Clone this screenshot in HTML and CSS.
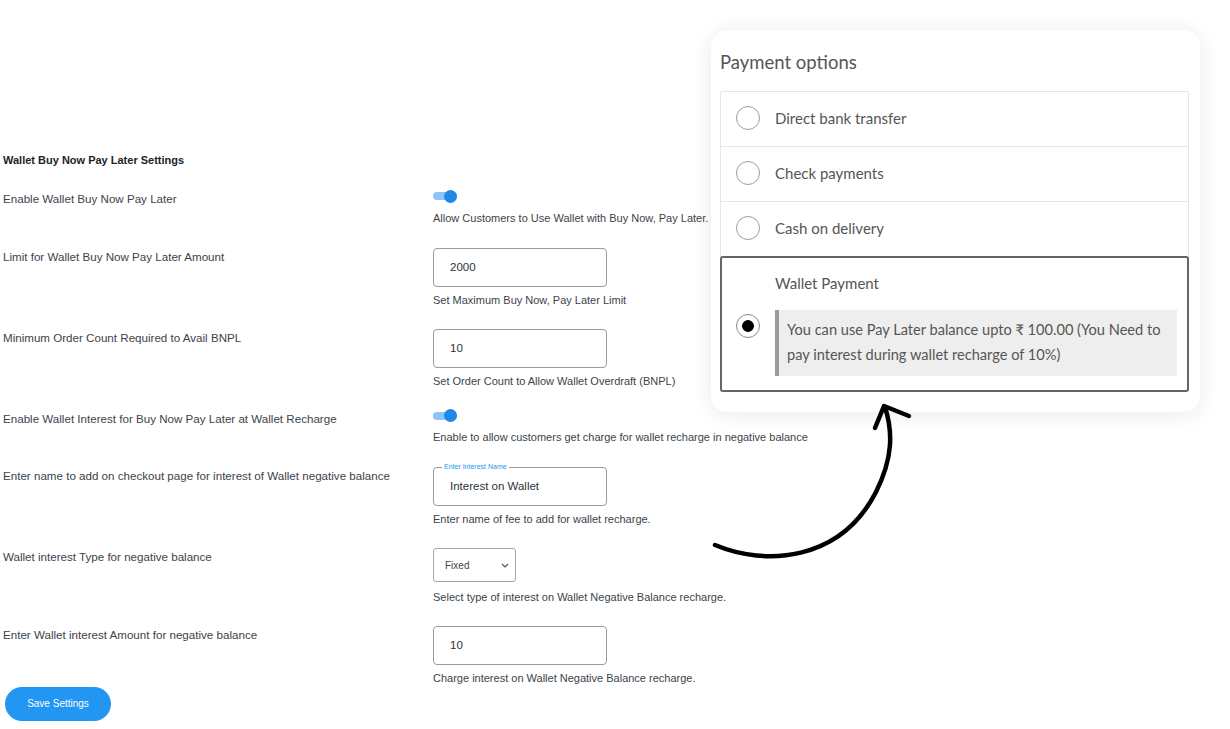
FILE: index.html
```html
<!DOCTYPE html>
<html lang="en">
<head>
    <meta charset="UTF-8">
    <meta name="viewport" content="width=device-width, initial-scale=1.0">
    <title>Wallet Buy Now Pay Later Settings</title>
    <link rel="stylesheet" href="styles.css">
</head>
<body>
    <div class="settings">
        <h2 class="settings-title">Wallet Buy Now Pay Later Settings</h2>

        <div class="row switch-row">
            <div class="label">Enable Wallet Buy Now Pay Later</div>
            <div class="field">
                <span class="toggle"><span class="knob"></span></span>
                <p class="desc">Allow Customers to Use Wallet with Buy Now, Pay Later.</p>
            </div>
        </div>

        <div class="row">
            <div class="label">Limit for Wallet Buy Now Pay Later Amount</div>
            <div class="field">
                <div class="input">2000</div>
                <p class="desc">Set Maximum Buy Now, Pay Later Limit</p>
            </div>
        </div>

        <div class="row">
            <div class="label">Minimum Order Count Required to Avail BNPL</div>
            <div class="field">
                <div class="input">10</div>
                <p class="desc">Set Order Count to Allow Wallet Overdraft (BNPL)</p>
            </div>
        </div>

        <div class="row switch-row">
            <div class="label">Enable Wallet Interest for Buy Now Pay Later at Wallet Recharge</div>
            <div class="field">
                <span class="toggle"><span class="knob"></span></span>
                <p class="desc">Enable to allow customers get charge for wallet recharge in negative balance</p>
            </div>
        </div>

        <div class="row">
            <div class="label">Enter name to add on checkout page for interest of Wallet negative balance</div>
            <div class="field">
                <div class="input floating">
                    <span class="float-label">Enter Interest Name</span>
                    Interest on Wallet
                </div>
                <p class="desc">Enter name of fee to add for wallet recharge.</p>
            </div>
        </div>

        <div class="row select-row">
            <div class="label">Wallet interest Type for negative balance</div>
            <div class="field">
                <div class="select">
                    <span>Fixed</span>
                    <svg width="8" height="5" viewBox="0 0 8 5"><path d="M1 1l3 3 3-3" fill="none" stroke="#555" stroke-width="1.2"/></svg>
                </div>
                <p class="desc">Select type of interest on Wallet Negative Balance recharge.</p>
            </div>
        </div>

        <div class="row last">
            <div class="label">Enter Wallet interest Amount for negative balance</div>
            <div class="field">
                <div class="input">10</div>
                <p class="desc">Charge interest on Wallet Negative Balance recharge.</p>
            </div>
        </div>

        <button class="btn">Save Settings</button>
    </div>

    <div class="card">
        <h3 class="card-title">Payment options</h3>
        <ul class="options">
            <li class="opt"><span class="radio"></span>Direct bank transfer</li>
            <li class="opt"><span class="radio"></span>Check payments</li>
            <li class="opt"><span class="radio"></span>Cash on delivery</li>
            <li class="opt wallet">
                <div class="opt-title">Wallet Payment</div>
                <div class="opt-body">
                    <span class="radio checked"></span>
                    <div class="info">You can use Pay Later balance upto ₹ 100.00 (You Need to pay interest during wallet recharge of 10%)</div>
                </div>
            </li>
        </ul>
    </div>

    <svg class="arrow" width="1230" height="729" viewBox="0 0 1230 729">
        <path d="M715 545 C 765 566, 840 562, 876 492 C 893 458, 893 432, 885 407" fill="none" stroke="#000" stroke-width="4.5" stroke-linecap="round"/>
        <path d="M875 428 L884 406 L909 416" fill="none" stroke="#000" stroke-width="4.5" stroke-linecap="round" stroke-linejoin="round"/>
    </svg>
</body>
</html>
```

FILE: styles.css
```css
body {
    margin: 0;
    font-family: "Liberation Sans", Arial, sans-serif;
    background: #fff;
    width: 1230px;
    height: 729px;
    overflow: hidden;
    position: relative;
}
.settings {
    padding: 153px 0 0 3px;
}
.settings-title {
    margin: 0 0 23px;
    font-size: 11px;
    line-height: 14px;
    font-weight: bold;
    color: #1d2327;
}
.row {
    display: grid;
    grid-template-columns: 430px 1fr;
    padding-bottom: 22px;
}
.row.switch-row {
    padding-bottom: 23px;
}
.row.last {
    padding-bottom: 2px;
}
.label {
    padding-top: 2px;
    font-size: 11.6px;
    line-height: 13px;
    color: #3c434a;
}
.field {
    display: flex;
    flex-direction: column;
    align-items: flex-start;
}
.desc {
    margin: 7px 0 0;
    font-size: 11px;
    line-height: 13px;
    color: #3c434a;
}
.switch-row .desc {
    margin-top: 10.5px;
}
.select-row .desc {
    margin-top: 8.5px;
}
.toggle {
    position: relative;
    display: block;
    width: 24px;
    height: 8px;
    margin: 2px 0 1px;
    border-radius: 4px;
    background: #8ec5f8;
}
.knob {
    position: absolute;
    right: 0;
    top: -2.5px;
    width: 13px;
    height: 13px;
    border-radius: 50%;
    background: #1e88e5;
}
.input {
    position: relative;
    box-sizing: border-box;
    width: 174px;
    height: 39px;
    padding-left: 16px;
    border: 1px solid #9a9a9a;
    border-radius: 4px;
    font-size: 11.5px;
    line-height: 37px;
    color: #2c3338;
}
.float-label {
    position: absolute;
    left: 8px;
    top: -6px;
    padding: 0 2px;
    background: #fff;
    font-size: 7px;
    line-height: 10px;
    color: #2196f3;
}
.select {
    box-sizing: border-box;
    display: flex;
    align-items: center;
    justify-content: space-between;
    width: 83px;
    height: 34px;
    padding: 0 6px 0 11px;
    border: 1px solid #a6a6a6;
    border-radius: 3px;
    font-size: 10px;
    color: #3c434a;
}
.btn {
    width: 106px;
    height: 34px;
    margin-left: 2px;
    border: none;
    border-radius: 17px;
    background: #2196f3;
    color: #fff;
    font-family: "Liberation Sans", Arial, sans-serif;
    font-size: 10px;
    cursor: pointer;
}

.card {
    position: absolute;
    left: 711px;
    top: 30px;
    width: 489px;
    height: 382px;
    box-sizing: border-box;
    padding: 0 11px 0 9px;
    background: #fff;
    border-radius: 16px;
    box-shadow: 0 2px 22px rgba(0,0,0,0.09);
    font-family: Lato, "Noto Sans", sans-serif;
    color: #555;
    z-index: 1;
}
.card-title {
    margin: 0;
    padding: 20px 0 0;
    font-size: 18.5px;
    font-weight: normal;
    line-height: 24px;
    color: #555;
}
.options {
    list-style: none;
    margin: 17px 0 0;
    padding: 0;
    border: 1px solid #e6e6e6;
    border-bottom: none;
    border-radius: 2px;
}
.opt {
    display: flex;
    align-items: center;
    height: 55px;
    box-sizing: border-box;
    padding: 0 0 3px 15px;
    border-bottom: 1px solid #e6e6e6;
    font-size: 15px;
}
.radio {
    box-sizing: border-box;
    flex: none;
    width: 24px;
    height: 24px;
    margin-right: 15px;
    border: 1.5px solid #9c9c9c;
    border-radius: 50%;
    background: #fff;
}
.radio.checked {
    margin-top: 4px;
    border-color: #8a8a8a;
    background: radial-gradient(circle, #000 0 5.5px, #fff 6.2px);
}
.opt.wallet {
    display: block;
    height: 136px;
    margin: -1px -1px -1px;
    padding: 15px 10px 0 14px;
    border: 2px solid #666;
    border-radius: 3px;
}
.opt-title {
    margin-left: 39px;
    line-height: 20px;
}
.opt-body {
    display: flex;
    align-items: flex-start;
    margin-top: 17px;
}
.info {
    flex: 1;
    padding: 7px 4px 9px 8px;
    border-left: 4px solid #9a9a9a;
    background: #eee;
    font-size: 14.6px;
    line-height: 25px;
}
.arrow {
    position: absolute;
    left: 0;
    top: 0;
    pointer-events: none;
    z-index: 2;
}
```
